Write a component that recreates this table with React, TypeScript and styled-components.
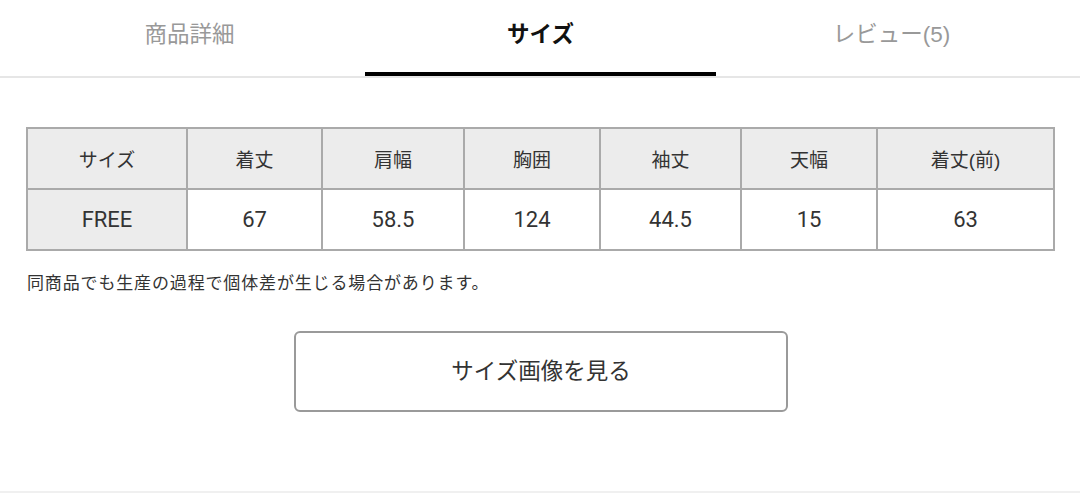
import React from "react";
import styled, { createGlobalStyle } from "styled-components";

const Global = createGlobalStyle`
  html, body { margin: 0; padding: 0; background: #fff; }
  body { font-family: "Liberation Sans", "Noto Sans CJK JP", sans-serif; color: #333; }
`;

const Page = styled.div`
  width: 1080px;
  height: 493px;
  display: flex;
  flex-direction: column;
  box-sizing: border-box;
  border-bottom: 2px solid #f0f0f0;
`;

const TabBar = styled.div`
  display: grid;
  grid-template-columns: repeat(3, 351px);
  padding: 0 13px 0 14px;
  border-bottom: 2px solid #e6e6e6;
  height: 76px;
  box-sizing: content-box;
`;

const Tab = styled.div<{ $active?: boolean }>`
  display: flex;
  align-items: center;
  justify-content: center;
  height: 72px;
  margin-bottom: -2px;
  border-bottom: 4px solid ${(p) => (p.$active ? "#000" : "transparent")};
  font-family: "Liberation Sans", "Noto Sans CJK JP", sans-serif;
  font-size: 22.5px;
  font-weight: ${(p) => (p.$active ? 700 : 400)};
  color: ${(p) => (p.$active ? "#111" : "#999")};
  line-height: 1;
  & > span { margin-top: -2px; }
`;

const Content = styled.div`
  padding: 49px 25px 0 26px;
  display: flex;
  flex-direction: column;
`;

const Table = styled.div`
  display: grid;
  grid-template-columns: 160px 135px 142px 136px 141px 136px 1fr;
  border-top: 2px solid #aaa;
  border-left: 2px solid #aaa;
`;

const Cell = styled.div<{ $shade?: boolean; $latin?: boolean }>`
  height: 59px;
  display: flex;
  align-items: center;
  justify-content: center;
  border-right: 2px solid #aaa;
  border-bottom: 2px solid #aaa;
  background: ${(p) => (p.$shade ? "#ececec" : "#fff")};
  font-size: ${(p) => (p.$latin ? "22px" : "19px")};
  color: #333;
  font-family: ${(p) =>
    p.$latin
      ? `Roboto, "Liberation Sans", sans-serif`
      : `"Liberation Sans", "Noto Sans CJK JP", sans-serif`};
`;

const Note = styled.p`
  margin: 19px 0 0 1px;
  font-size: 17px;
  letter-spacing: 0.85px;
  color: #333;
  font-family: "Noto Sans CJK JP", sans-serif;
  line-height: 24px;
`;

const ButtonRow = styled.div`
  display: flex;
  justify-content: center;
  margin-top: 37px;
  padding-right: 2px;
`;

const Button = styled.button`
  width: 494px;
  height: 81px;
  padding: 0 0 5px;
  border: 2px solid #9a9a9a;
  border-radius: 6px;
  background: #fff;
  font-family: "Noto Sans CJK JP", sans-serif;
  font-size: 22.5px;
  color: #333;
  cursor: pointer;
  margin-left: 3px;
`;

const headers = ["サイズ", "着丈", "肩幅", "胸囲", "袖丈", "天幅", "着丈(前)"];
const values = ["FREE", "67", "58.5", "124", "44.5", "15", "63"];

export default function App() {
  return (
    <Page>
      <Global />
      <TabBar>
        <Tab><span>商品詳細</span></Tab>
        <Tab $active><span>サイズ</span></Tab>
        <Tab><span>レビュー(5)</span></Tab>
      </TabBar>
      <Content>
        <Table>
          {headers.map((h) => (
            <Cell key={h} $shade>{h}</Cell>
          ))}
          {values.map((v, i) => (
            <Cell key={v + i} $shade={i === 0} $latin>{v}</Cell>
          ))}
        </Table>
        <Note>同商品でも生産の過程で個体差が生じる場合があります。</Note>
        <ButtonRow>
          <Button>サイズ画像を見る</Button>
        </ButtonRow>
      </Content>
    </Page>
  );
}
